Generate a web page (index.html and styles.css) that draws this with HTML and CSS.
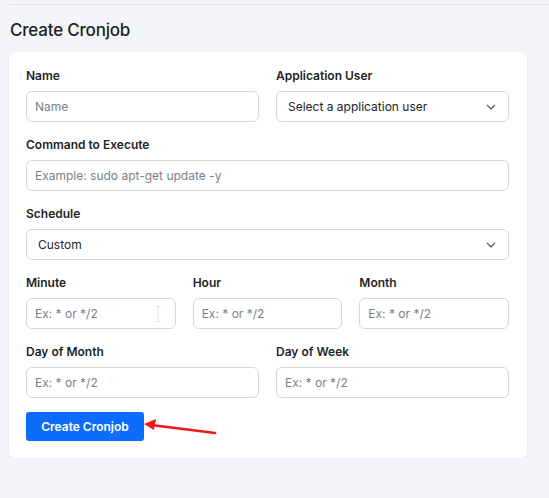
FILE: index.html
```html
<!DOCTYPE html>
<html>
<head>
<meta charset="utf-8">
<link rel="stylesheet" href="styles.css">
</head>
<body>
<div class="page">
  <div class="topline"></div>
  <h1 class="title">Create Cronjob</h1>
  <div class="card">
    <div class="row two">
      <div class="group">
        <label class="label">Name</label>
        <div class="input"><span class="ph">Name</span></div>
      </div>
      <div class="group">
        <label class="label">Application User</label>
        <div class="input select"><span class="val">Select a application user</span>
          <svg class="chev" width="10" height="6" viewBox="0 0 10 6"><path d="M1 1l4 4 4-4" fill="none" stroke="#555" stroke-width="1.2"/></svg>
        </div>
      </div>
    </div>
    <div class="group">
      <label class="label">Command to Execute</label>
      <div class="input"><span class="ph">Example: sudo apt-get update -y</span></div>
    </div>
    <div class="group">
      <label class="label">Schedule</label>
      <div class="input select"><span class="val">Custom</span>
        <svg class="chev" width="10" height="6" viewBox="0 0 10 6"><path d="M1 1l4 4 4-4" fill="none" stroke="#555" stroke-width="1.2"/></svg>
      </div>
    </div>
    <div class="row three">
      <div class="group">
        <label class="label">Minute</label>
        <div class="input cursorwrap"><span class="ph">Ex: * or */2</span>
          <svg class="ibeam" width="6" height="16" viewBox="0 0 6 16"><path d="M0.5 0.5h5M3 0.5v15M0.5 15.5h5" fill="none" stroke="#e4e4ea" stroke-width="1"/></svg>
        </div>
      </div>
      <div class="group">
        <label class="label">Hour</label>
        <div class="input"><span class="ph">Ex: * or */2</span></div>
      </div>
      <div class="group">
        <label class="label">Month</label>
        <div class="input"><span class="ph">Ex: * or */2</span></div>
      </div>
    </div>
    <div class="row two">
      <div class="group">
        <label class="label">Day of Month</label>
        <div class="input"><span class="ph">Ex: * or */2</span></div>
      </div>
      <div class="group">
        <label class="label">Day of Week</label>
        <div class="input"><span class="ph">Ex: * or */2</span></div>
      </div>
    </div>
    <div class="actions">
      <button class="btn">Create Cronjob</button>
      <svg class="arrow" width="80" height="20" viewBox="0 0 80 20"><path d="M72 15L8 7" stroke="#f01818" stroke-width="2.6" stroke-linecap="round"/><path d="M1 6L13 1L11 12Z" fill="#f01818"/></svg>
    </div>
  </div>
</div>
</body>
</html>
```

FILE: styles.css
```css
html, body {
  margin: 0;
  padding: 0;
  background: #f4f5f9;
  font-family: Inter, "Noto Sans", sans-serif;
  color: #1d1f24;
}
.page {
  padding-top: 4px;
  padding-left: 9px;
  width: 540px;
}
.topline {
  height: 1px;
  background: #e2e3e8;
}
.title {
  margin: 14px 0 0 1px;
  font-size: 17px;
  line-height: 22px;
  font-weight: 500;
  letter-spacing: -0.2px;
  color: #1d1f24;
}
.card {
  margin-top: 11px;
  width: 518px;
  box-sizing: border-box;
  background: #fff;
  border-radius: 6px;
  box-shadow: 0 1px 3px rgba(20, 30, 60, 0.08);
  padding: 16px 18px 17px 17px;
}
.row {
  display: grid;
  column-gap: 17px;
}
.row.two { grid-template-columns: 1fr 1fr; }
.row.three { grid-template-columns: 1fr 1fr 1fr; column-gap: 17px; }
.group {
  display: flex;
  flex-direction: column;
  margin-bottom: 15px;
}
.label {
  font-size: 12px;
  line-height: 16px;
  font-weight: 600;
  color: #1d1f24;
  margin-bottom: 7px;
}
.input {
  position: relative;
  height: 31px;
  box-sizing: border-box;
  border: 1px solid #d6d7de;
  border-radius: 6px;
  display: flex;
  align-items: center;
  padding: 0 8px;
  font-size: 12px;
}
.ph { color: #7b7f8a; }
.select { padding: 0 11px 0 11px; justify-content: space-between; }
.val { color: #23252b; }
.chev { margin-right: 1px; }
.ibeam {
  position: absolute;
  left: 128px;
  top: 7px;
}
.actions {
  position: relative;
  margin-top: -1px;
}
.btn {
  width: 118px;
  height: 29px;
  border: none;
  border-radius: 3px;
  background: #0c6cfb;
  color: #fff;
  font-family: Inter, "Noto Sans", sans-serif;
  font-size: 12px;
  font-weight: 600;
  padding: 0;
  display: block;
}
.arrow {
  position: absolute;
  left: 117px;
  top: 6px;
}
```
